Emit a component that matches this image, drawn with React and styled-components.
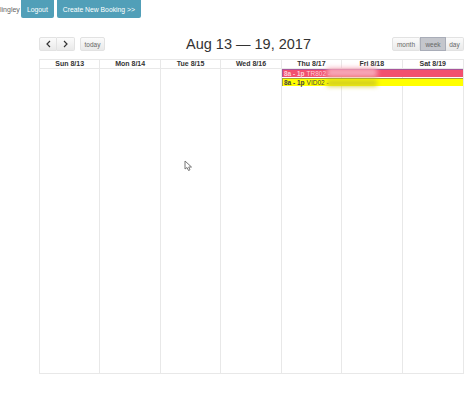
import React from "react";
import styled, { createGlobalStyle } from "styled-components";

const Global = createGlobalStyle`
  html, body { margin: 0; padding: 0; background: #fff; }
  body { font-family: "Liberation Sans", Arial, sans-serif; width: 474px; height: 404px; overflow: hidden; }
`;

const Page = styled.div`
  position: relative;
  width: 474px;
  height: 404px;
  overflow: hidden;
`;

const TopBar = styled.div`
  display: flex;
  align-items: center;
  height: 18px;
  gap: 3px;
`;

const UserName = styled.span`
  font-size: 7px;
  color: #666;
  width: 19px;
  margin-right: -1px;
  white-space: nowrap;
`;

const TopButton = styled.button`
  height: 18px;
  padding: 0 6px;
  border: 0;
  border-radius: 0 0 2px 2px;
  background: #519fb8;
  color: #fff;
  font: 6.800px "Liberation Sans", Arial, sans-serif;
  white-space: nowrap;
`;

const Calendar = styled.div`
  margin: 19px 0 0 39px;
  width: 425px;
`;

const Toolbar = styled.div`
  display: flex;
  justify-content: space-between;
  align-items: center;
  height: 14px;
  margin-bottom: 8px;
`;

const Group = styled.div`
  display: flex;
  gap: ${p => p.$gap || 0}px;
`;

const NavButton = styled.button`
  height: 14px;
  width: ${p => p.$width}px;
  padding: 0;
  border: 1px solid ${p => (p.$active ? "#a9adb8" : "#e2e2e2")};
  border-left-width: ${p => (p.$joined && !p.$active ? 0 : 1)}px;
  border-radius: ${p => p.$radius};
  background: ${p => (p.$active ? "#c4c6cc" : "linear-gradient(#fbfbfb, #e9e9e9)")};
  color: #666;
  font: 6.500px "Liberation Sans", Arial, sans-serif;
  display: flex;
  align-items: center;
  justify-content: center;
`;

const Title = styled.h2`
  margin: 0;
  font-size: 14.500px;
  font-weight: 400;
  color: #333;
  line-height: 14px;
  white-space: nowrap;
`;

const Grid = styled.div`
  border: 1px solid #e8e8e8;
  height: 315px;
  box-sizing: border-box;
`;

const Header = styled.div`
  display: grid;
  grid-template-columns: repeat(7, 1fr);
  height: 8px;
  border-bottom: 1px solid #e8e8e8;
`;

const HeadCell = styled.div`
  font-size: 7px;
  font-weight: 700;
  line-height: 8px;
  text-align: center;
  color: #333;
  border-right: ${p => (p.$last ? "0" : "1px solid #e8e8e8")};
`;

const Body = styled.div`
  position: relative;
  display: grid;
  grid-template-columns: repeat(7, 1fr);
  height: 305px;
`;

const Column = styled.div`
  border-right: ${p => (p.$last ? "0" : "1px solid #e8e8e8")};
`;

const Events = styled.div`
  position: absolute;
  top: 0;
  left: 242px;
  right: 0;
  display: flex;
  flex-direction: column;
  gap: 1px;
`;

const Event = styled.div`
  position: relative;
  height: 8px;
  box-sizing: border-box;
  border-top: 1px solid ${p => p.$edge};
  border-left: 1px solid ${p => p.$edge};
  background: ${p => p.$bg};
  color: ${p => p.$fg};
  font-size: 6.500px;
  line-height: 7px;
  padding-left: 1px;
  white-space: nowrap;

  b { font-weight: 700; margin-right: 2px; }
`;

const Smudge = styled.div`
  position: absolute;
  top: ${p => p.$rise}px;
  bottom: 0;
  left: 44px;
  width: 50px;
  background: ${p => p.$bg};
  filter: blur(2.500px);
`;

const Cursor = styled.svg`
  position: absolute;
  left: 184px;
  top: 160px;
`;

const days = ["Sun 8/13", "Mon 8/14", "Tue 8/15", "Wed 8/16", "Thu 8/17", "Fri 8/18", "Sat 8/19"];

const Chevron = ({ flip }) => (
  <svg width="7" height="8" viewBox="0 0 7 8" fill="none" stroke="#333" strokeWidth="1.2">
    <path d={flip ? "M2 1l3 3-3 3" : "M5 1L2 4l3 3"} />
  </svg>
);

export default function App() {
  return (
    <Page>
      <Global />
      <TopBar>
        <UserName>lingley</UserName>
        <TopButton>Logout</TopButton>
        <TopButton>Create New Booking &gt;&gt;</TopButton>
      </TopBar>
      <Calendar>
        <Toolbar>
          <Group $gap={5}>
            <Group>
              <NavButton $width={18} $radius="2px 0 0 2px"><Chevron /></NavButton>
              <NavButton $width={18} $joined $radius="0 2px 2px 0"><Chevron flip /></NavButton>
            </Group>
            <NavButton $width={25} $radius="2px">today</NavButton>
          </Group>
          <Title>Aug 13 — 19, 2017</Title>
          <Group>
            <NavButton $width={28} $radius="2px 0 0 2px">month</NavButton>
            <NavButton $width={26} $joined $active $radius="0">week</NavButton>
            <NavButton $width={18} $joined $radius="0 2px 2px 0">day</NavButton>
          </Group>
        </Toolbar>
        <Grid>
          <Header>
            {days.map((d, i) => <HeadCell key={d} $last={i === 6}>{d}</HeadCell>)}
          </Header>
          <Body>
            {days.map((d, i) => <Column key={d} $last={i === 6} />)}
            <Events>
              <Event $bg="#f2506f" $fg="#fbd0da" $edge="#a8559a">
                <b>8a - 1p</b>TR802 -
                <Smudge $rise={-2} $bg="#f7a8b8" />
              </Event>
              <Event $bg="#ffff00" $fg="#444" $edge="#a3a33a">
                <b>8a - 1p</b>VID02 -
                <Smudge $rise={1} $bg="#d0cc20" />
              </Event>
            </Events>
          </Body>
        </Grid>
      </Calendar>
      <Cursor width="9" height="12" viewBox="0 0 9 12" fill="#fff" stroke="#777" strokeWidth="1">
        <path d="M1 1v8l2-1.500 1.500 3 1.500-.7L4.700 7H7.500z" />
      </Cursor>
    </Page>
  );
}
